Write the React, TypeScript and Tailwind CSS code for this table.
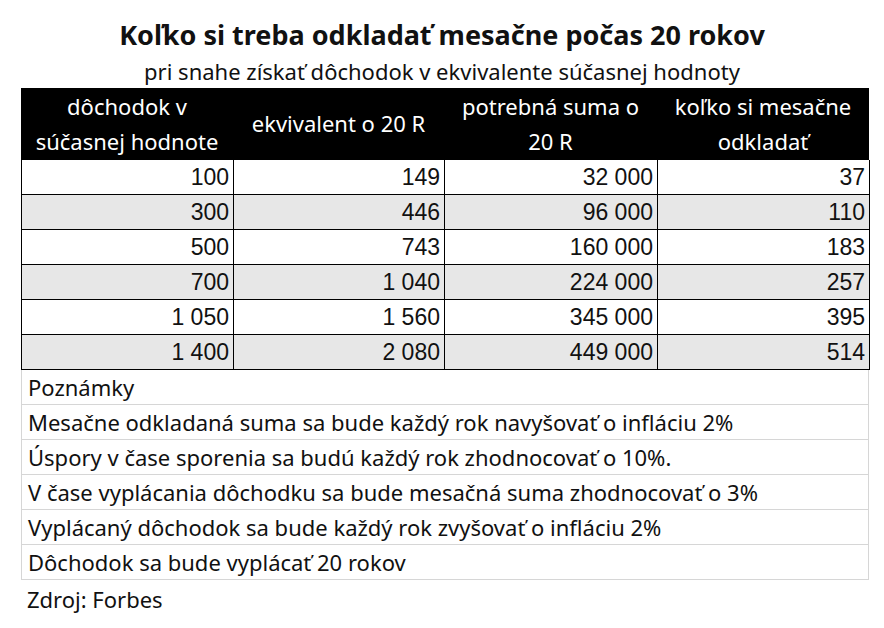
const header = [
  ["dôchodok v", "súčasnej hodnote"],
  ["ekvivalent o 20 R"],
  ["potrebná suma o", "20 R"],
  ["koľko si mesačne", "odkladať"],
];

const rows = [
  ["100", "149", "32 000", "37"],
  ["300", "446", "96 000", "110"],
  ["500", "743", "160 000", "183"],
  ["700", "1 040", "224 000", "257"],
  ["1 050", "1 560", "345 000", "395"],
  ["1 400", "2 080", "449 000", "514"],
];

const notes = [
  "Poznámky",
  "Mesačne odkladaná suma sa bude každý rok navyšovať o infláciu 2%",
  "Úspory v čase sporenia sa budú každý rok zhodnocovať o 10%.",
  "V čase vyplácania dôchodku sa bude mesačná suma zhodnocovať o 3%",
  "Vyplácaný dôchodok sa bude každý rok zvyšovať o infláciu 2%",
  "Dôchodok sa bude vyplácať 20 rokov",
];

export default function App() {
  return (
    <div
      className="w-[884px] h-[628px] bg-white text-[#111] overflow-hidden"
      style={{ fontFamily: '"Noto Sans", sans-serif' }}
    >
      {/* Title */}
      <div className="pt-[16px] text-center">
        <h1 className="text-[27px] leading-[38px] font-bold">
          Koľko si treba odkladať mesačne počas 20 rokov
        </h1>
        <p className="text-[22px] leading-[34px]">
          pri snahe získať dôchodok v ekvivalente súčasnej hodnoty
        </p>
      </div>

      <div className="ml-[21px] w-[848px]">
        {/* Table header */}
        <div className="grid grid-cols-[212px_211px_213px_212px] h-[71px] bg-black text-white">
          {header.map((lines, i) => (
            <div
              key={i}
              className="flex flex-col items-center justify-center text-[22px] leading-[35px]"
            >
              {lines.map((l) => (
                <span key={l}>{l}</span>
              ))}
            </div>
          ))}
        </div>

        {/* Table body */}
        <div
          className="border-l border-b border-black"
          style={{ fontFamily: '"Liberation Sans", Arial, sans-serif' }}
        >
          {rows.map((row, r) => (
            <div
              key={r}
              className={`grid grid-cols-[212px_211px_213px_212px] h-[35px] border-t border-black ${
                r % 2 === 1 ? "bg-[#e7e7e7]" : "bg-white"
              }`}
            >
              {row.map((v, c) => (
                <div
                  key={c}
                  className="border-r border-black flex items-center justify-end pr-[4px] text-[23px]"
                >
                  {v}
                </div>
              ))}
            </div>
          ))}
        </div>

        {/* Notes */}
        <div className="border-l border-r border-[#d6d6d6]">
          {notes.map((n) => (
            <div
              key={n}
              className="h-[35px] border-b border-[#d6d6d6] flex items-center pl-[6px] text-[22px]"
            >
              {n}
            </div>
          ))}
        </div>

        <div className="h-[38px] flex items-center pl-[6px] text-[22px]">
          Zdroj: Forbes
        </div>
      </div>
    </div>
  );
}
